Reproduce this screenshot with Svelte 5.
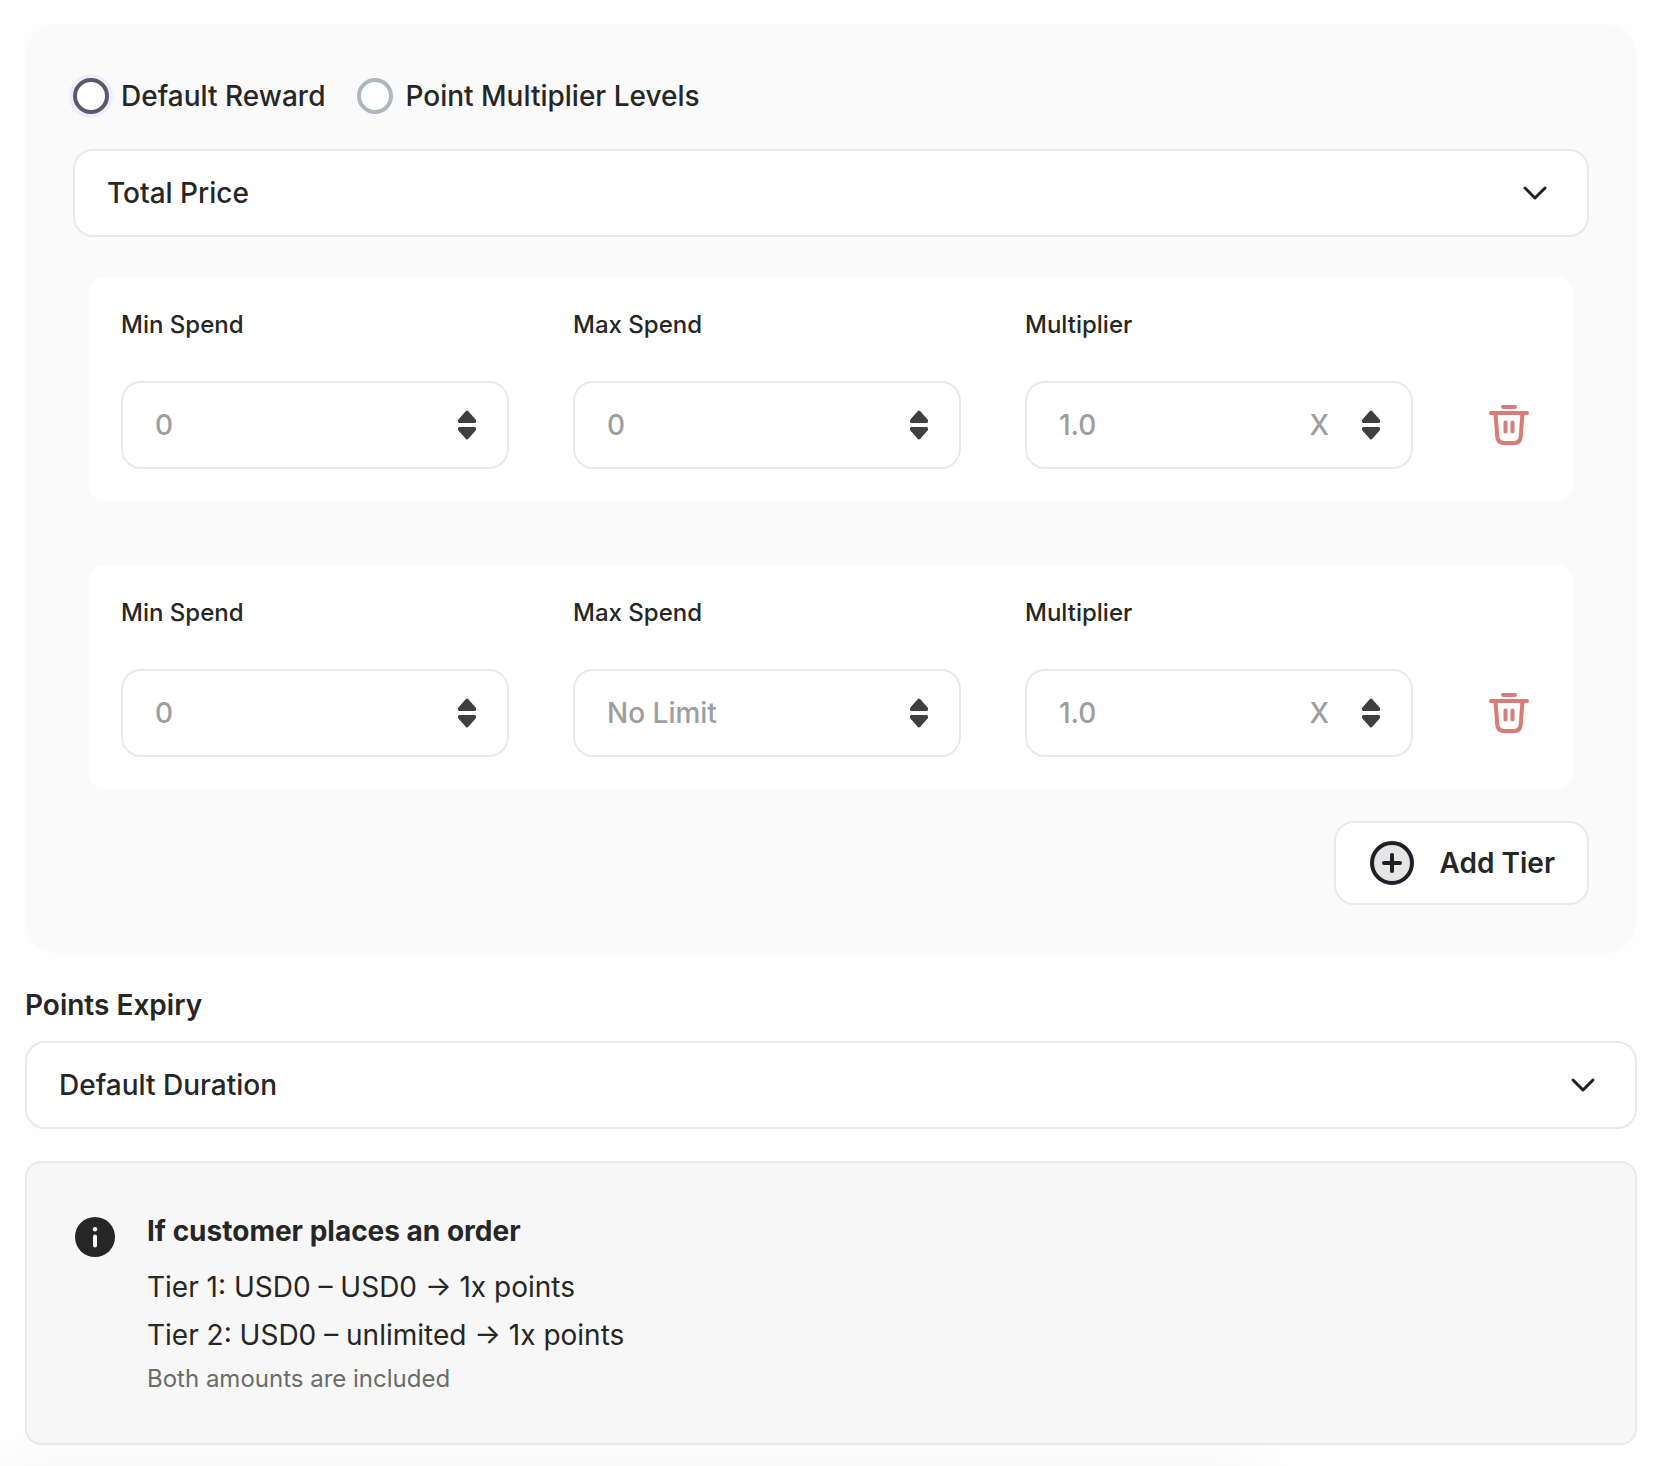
<script>
    let rewardType = $state('');
    let highlighted = $state('default');
    let basis = $state('total');
    let expiry = $state('default');

    let tiers = $state([
        { id: 1, min: null, max: null, multiplier: null, maxHint: '0' },
        { id: 2, min: null, max: null, multiplier: null, maxHint: 'No Limit' },
    ]);

    const rewardTypes = [
        { value: 'default', label: 'Default Reward' },
        { value: 'levels', label: 'Point Multiplier Levels' },
    ];

    const fields = [
        { key: 'min', label: 'Min Spend' },
        { key: 'max', label: 'Max Spend' },
        { key: 'multiplier', label: 'Multiplier', suffix: 'X' },
    ];

    const placeholder = (tier, key) => {
        if (key === 'multiplier') return '1.0';
        return key === 'max' ? tier.maxHint : '0';
    };

    const step = (tier, key, amount) => {
        tier[key] = Math.max(0, (tier[key] ?? 0) + amount);
    };

    const addTier = () => {
        const id = Math.max(0, ...tiers.map((t) => t.id)) + 1;
        tiers.push({ id, min: null, max: null, multiplier: null, maxHint: 'No Limit' });
    };

    const removeTier = (id) => {
        tiers = tiers.filter((t) => t.id !== id);
    };

    const upper = (tier) => {
        if (tier.max !== null) return `USD${tier.max}`;
        return tier.maxHint === 'No Limit' ? 'unlimited' : 'USD0';
    };
</script>

{#snippet chevron()}
    <svg class="chevron" width="32" height="32" viewBox="0 0 32 32" aria-hidden="true">
        <path d="M6 11l10 10 10-10" />
    </svg>
{/snippet}

<main>
    <section class="panel">
        <div class="radios" role="radiogroup" aria-label="Reward type">
            {#each rewardTypes as type}
                <label class="radio">
                    <input
                        type="radio"
                        name="reward"
                        value={type.value}
                        class:highlighted={highlighted === type.value}
                        bind:group={rewardType}
                        onfocus={() => (highlighted = type.value)}
                    />
                    {type.label}
                </label>
            {/each}
        </div>

        <div class="select">
            <select aria-label="Reward basis" bind:value={basis}>
                <option value="total">Total Price</option>
                <option value="subtotal">Subtotal</option>
            </select>
            {@render chevron()}
        </div>

        <div class="tiers">
            {#each tiers as tier (tier.id)}
                <div class="tier">
                    {#each fields as field}
                        <div class="field">
                            <label for="{field.key}-{tier.id}">{field.label}</label>
                            <div class="number">
                                <input
                                    id="{field.key}-{tier.id}"
                                    type="number"
                                    placeholder={placeholder(tier, field.key)}
                                    bind:value={tier[field.key]}
                                />
                                {#if field.suffix}
                                    <span class="suffix">{field.suffix}</span>
                                {/if}
                                <div class="stepper">
                                    <button type="button" aria-label="Increase" onclick={() => step(tier, field.key, 1)}>
                                        <svg width="20" height="14" viewBox="0 0 20 14">
                                            <path d="M10 2L17.500 10.500V11.500H2.500V10.500Z" />
                                        </svg>
                                    </button>
                                    <button type="button" aria-label="Decrease" onclick={() => step(tier, field.key, -1)}>
                                        <svg width="20" height="14" viewBox="0 0 20 14">
                                            <path d="M10 12L17.500 3.500V2.500H2.500V3.500Z" />
                                        </svg>
                                    </button>
                                </div>
                            </div>
                        </div>
                    {/each}
                    <button type="button" class="remove" aria-label="Remove tier" onclick={() => removeTier(tier.id)}>
                        <svg width="48" height="48" viewBox="0 0 48 48">
                            <path d="M18 6h12M6 12h36M10.500 12l1.700 23c.3 4.500 2.300 7 6.300 7h11c4 0 6-2.500 6.300-7l1.700-23M20.500 21.500v9M27.500 21.500v9" />
                        </svg>
                    </button>
                </div>
            {/each}
        </div>

        <button type="button" class="add" onclick={addTier}>
            <svg width="48" height="48" viewBox="0 0 48 48" aria-hidden="true">
                <circle cx="24" cy="24" r="20" />
                <path d="M24 16v16M16 24h16" />
            </svg>
            Add Tier
        </button>
    </section>

    <section class="expiry">
        <label for="expiry">Points Expiry</label>
        <div class="select">
            <select id="expiry" bind:value={expiry}>
                <option value="default">Default Duration</option>
                <option value="never">Never</option>
            </select>
            {@render chevron()}
        </div>
    </section>

    <section class="info">
        <svg width="40" height="40" viewBox="0 0 40 40" aria-hidden="true">
            <circle cx="20" cy="20" r="20" fill="#262626" />
            <circle cx="20" cy="12.200" r="2.200" fill="#f7f7f7" />
            <rect x="18" y="17.500" width="4" height="13" rx="2" fill="#f7f7f7" />
        </svg>
        <div>
            <h2>If customer places an order</h2>
            {#each tiers as tier, i (tier.id)}
                <p>Tier {i + 1}: USD{tier.min ?? 0} – {upper(tier)} → {tier.multiplier ?? 1}x points</p>
            {/each}
            <small>Both amounts are included</small>
        </div>
    </section>
</main>

<!-- shadow cast by the footer bar below the fold -->
<div class="footer-shadow"></div>

<style>
    :global(body) {
        background: #fefefe;
    }

    main {
        padding: 24px 23px 20px 25px;
        color: #262626;
        font-family: Inter, "Liberation Sans", sans-serif;
        font-size: 28px;
        line-height: 40px;
    }

    input,
    select,
    button {
        font: inherit;
        color: inherit;
    }

    button {
        padding: 0;
        border: none;
        background: none;
        cursor: pointer;
    }

    svg {
        display: block;
        flex: none;
    }

    .panel {
        display: flex;
        flex-direction: column;
        padding: 48px;
        border-radius: 32px;
        background: #fafafa;
    }

    .radios {
        display: flex;
        gap: 32px;
        height: 48px;
        margin-bottom: 29px;
    }

    .radio {
        display: flex;
        align-items: center;
        gap: 12px;
        font-weight: 500;
    }

    .radio input {
        appearance: none;
        width: 36px;
        height: 36px;
        margin: 0;
        border: 4px solid #adb5bd;
        border-radius: 50%;
        background: #fff;
        outline: none;
    }

    .radio input.highlighted {
        border-color: #5b586e;
        box-shadow: 0 0 0 4px #f0edfc;
    }

    .radio input:checked {
        background: radial-gradient(#5b586e 8px, #fff 9px);
    }

    .select {
        display: grid;
        align-items: center;
    }

    .select select {
        grid-area: 1 / 1;
        appearance: none;
        height: 88px;
        padding: 0 80px 0 32px;
        border: 2px solid #e9e9e9;
        border-radius: 20px;
        background: #fff;
        font-weight: 500;
    }

    .chevron {
        grid-area: 1 / 1;
        justify-self: end;
        margin-right: 38px;
        fill: none;
        stroke: #1f1f27;
        stroke-width: 3;
        stroke-linecap: round;
        stroke-linejoin: round;
        pointer-events: none;
    }

    .tiers {
        display: flex;
        flex-direction: column;
        gap: 64px;
        margin: 40px 16px 32px;
    }

    .tier {
        display: grid;
        grid-template-columns: 1fr 1fr 1fr 64px;
        gap: 64px;
        padding: 32px;
        border-radius: 16px;
        background: #fff;
    }

    .field {
        display: flex;
        flex-direction: column;
        gap: 40px;
        min-width: 0;
    }

    .field label {
        font-size: 24px;
        font-weight: 500;
        line-height: 32px;
    }

    .number {
        display: flex;
        align-items: center;
        height: 84px;
        padding: 0 30px 0 32px;
        border: 2px solid #e9e9e9;
        border-radius: 20px;
    }

    .number input {
        flex: 1;
        min-width: 0;
        padding: 0;
        border: none;
        outline: none;
        background: none;
        font-weight: 500;
        appearance: textfield;
    }

    .number input::-webkit-inner-spin-button {
        display: none;
    }

    .number input::placeholder,
    .suffix {
        color: #9e9e9e;
    }

    .suffix {
        margin-right: 32px;
        font-weight: 500;
    }

    .stepper {
        display: flex;
        flex-direction: column;
        gap: 2px;
    }

    .stepper path {
        fill: #404040;
        stroke: #404040;
        stroke-width: 3;
        stroke-linejoin: round;
    }

    .remove {
        align-self: end;
        display: grid;
        place-items: center;
        height: 88px;
    }

    .remove path {
        fill: none;
        stroke: #d97b76;
        stroke-width: 4;
        stroke-linecap: round;
        stroke-linejoin: round;
    }

    .add {
        align-self: flex-end;
        display: flex;
        align-items: center;
        gap: 24px;
        height: 84px;
        padding: 0 32px;
        border: 2px solid #e9e9e9;
        border-radius: 20px;
        background: #fff;
        font-weight: 600;
    }

    .add svg {
        fill: #e5e5e5;
        stroke: #1f1f27;
        stroke-width: 4;
        stroke-linecap: round;
    }

    .expiry {
        margin: 32px 0;
    }

    .expiry label {
        display: block;
        margin-bottom: 16px;
        font-weight: 600;
    }

    .info {
        display: flex;
        gap: 32px;
        padding: 48px 48px 44px;
        border: 2px solid #e9e9e9;
        border-radius: 16px;
        background: #f7f7f7;
    }

    .info svg {
        margin-top: 6px;
    }

    .info h2 {
        margin: 0 0 12px;
        font-size: 28px;
        font-weight: 700;
    }

    .info p {
        margin: 0;
        line-height: 48px;
    }

    .info small {
        display: block;
        color: #6b6b6b;
        font-size: 24px;
    }

    .footer-shadow {
        position: fixed;
        top: 100%;
        left: 0;
        width: 76%;
        height: 40px;
        box-shadow: 0 0 48px rgba(0, 0, 0, 0.04);
        pointer-events: none;
    }
</style>
